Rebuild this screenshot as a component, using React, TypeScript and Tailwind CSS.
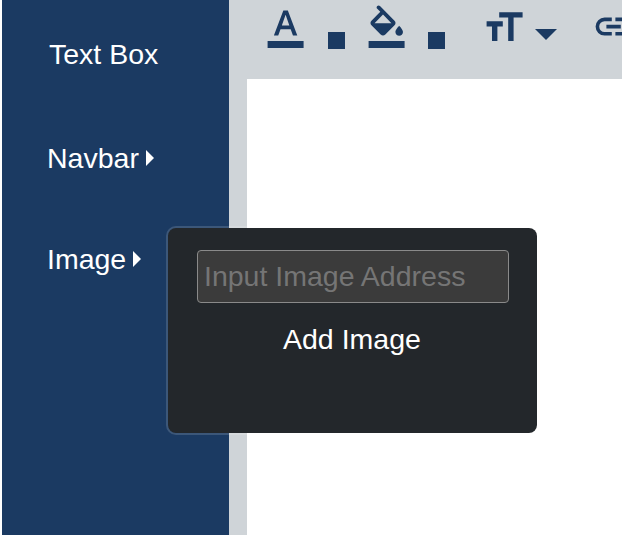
import React from 'react';

function Icon({ path, className = '' }: { path: string; className?: string }) {
  return (
    <svg viewBox="0 0 24 24" className={`h-[43.2px] w-[43.2px] shrink-0 fill-current ${className}`}>
      <path d={path} />
    </svg>
  );
}

function Swatch({ className }: { className: string }) {
  return <span className={`mt-[26.7px] block h-[17px] w-[17px] shrink-0 bg-[#1b3a62] ${className}`} />;
}

function RightCaret() {
  return (
    <svg viewBox="0 0 8 16" className="h-4 w-2 fill-white">
      <path d="M0 0L8 8L0 16Z" />
    </svg>
  );
}

const TEXT_COLOR =
  'M2 20h20v4H2v-4zm3.49-3h2.42l1.27-3.58h5.65L16.09 17h2.42L13.25 3h-2.5L5.49 17zm4.42-5.61 2.03-5.79h.12l2.03 5.79H9.91z';
const FILL_COLOR =
  'M16.4 8.78 8.32.6a1.05 1.05 0 0 0-1.5 1.5L8.5 3.78 3.6 8.78c-.75.75-.75 1.75 0 2.5l5.1 5.1c.75.75 1.85.75 2.6 0l5.1-5.1c.75-.75.75-1.75 0-2.5zM5.3 10.1 10 5.21 14.7 10.1H5.3zM19 11.5s-2.1 2.17-2.1 3.5c0 1.15.95 2.1 2.1 2.1s2.1-.95 2.1-2.1c0-1.33-2.1-3.5-2.1-3.5zM2 20h20v4H2v-4z';
const TEXT_SIZE = 'M14 20V7H9V4h13v3h-5v13zM5 20v-8H2V9h9v3H8v8z';
const LINK =
  'M11 17H7q-2.075 0-3.537-1.463T2 12q0-2.075 1.463-3.537T7 7h4v2H7q-1.25 0-2.125.875T4 12q0 1.25.875 2.125T7 15h4zm-3-4v-2h8v2zm5 4v-2h4q1.25 0 2.125-.875T20 12q0-1.25-.875-2.125T17 9h-4V7h4q2.075 0 3.538 1.463T22 12q0 2.075-1.463 3.538T17 17z';

export default function App() {
  return (
    <div className="h-[535px] w-[628px] overflow-hidden bg-white pr-[6px] pl-[2px] font-['Liberation_Sans',Arial,sans-serif] text-[28.5px] leading-8 text-white">
      <div className="relative flex h-full overflow-hidden bg-[#cfd4d8]">
        <nav className="flex w-[226.7px] shrink-0 flex-col items-start bg-[#1b3a62] pt-[38px] pl-[45px]">
          <button className="ml-[2px] h-8 whitespace-nowrap">Text Box</button>
          <button className="mt-[72px] flex h-8 items-center gap-[7px]">
            Navbar
            <RightCaret />
          </button>
          <button className="mt-[69px] flex h-8 items-center gap-[7px]">
            Image
            <RightCaret />
          </button>
        </nav>
        <main className="flex min-w-0 flex-1 flex-col pl-[18px]">
          <header className="flex h-[79px] shrink-0 items-start overflow-hidden pt-[5.3px] text-[#1b3a62]">
            <Icon path={TEXT_COLOR} className="ml-[17.7px]" />
            <Swatch className="ml-[20.4px]" />
            <Icon path={FILL_COLOR} className="ml-[19.7px]" />
            <Swatch className="ml-[20.1px]" />
            <Icon path={TEXT_SIZE} className="ml-[37.6px]" />
            <svg viewBox="0 0 22 11" className="mt-[23.3px] ml-[9.3px] h-[11px] w-[22px] shrink-0 fill-current">
              <path d="M0 0H22L11 11Z" />
            </svg>
            <Icon path={LINK} className="ml-[35.3px]" />
          </header>
          <section className="flex-1 bg-white" />
        </main>
        <div className="absolute top-[226px] left-[164px] flex h-[209px] w-[373px] flex-col rounded-[10px] border-2 border-white/15 bg-[#23272b] bg-clip-padding pt-[22px] pl-[29px]">
          <input
            type="text"
            placeholder="Input Image Address"
            className="h-[53px] w-[312px] rounded-[4px] border border-[#8a8a8a] bg-[#3b3b3b] px-[6px] outline-none placeholder:text-[#757575]"
          />
          <button className="mt-[20px] ml-[86px] h-8 self-start whitespace-nowrap">Add Image</button>
        </div>
      </div>
    </div>
  );
}
